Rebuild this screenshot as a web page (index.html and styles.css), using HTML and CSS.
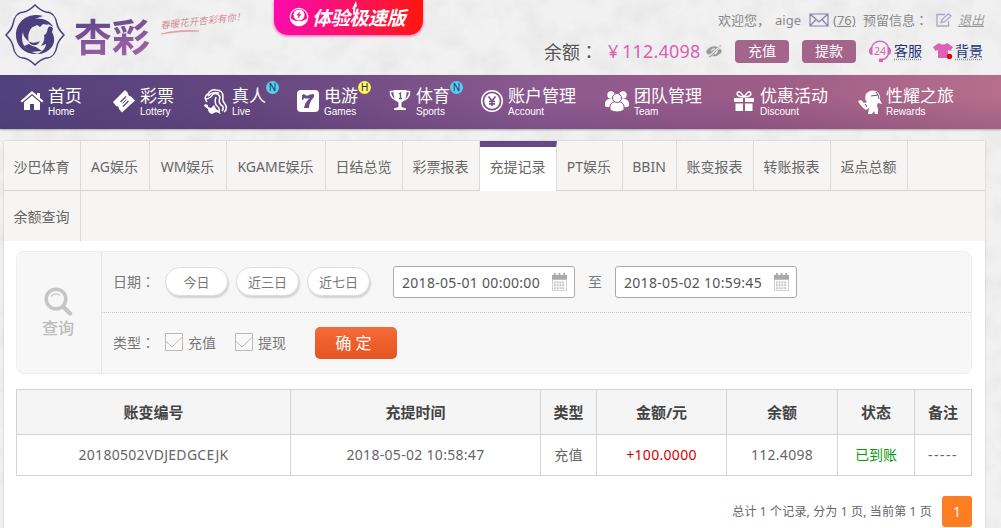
FILE: index.html
```html
<!DOCTYPE html>
<html lang="zh-CN">
<head>
  <meta charset="UTF-8">
  <meta name="viewport" content="width=device-width, initial-scale=1.0">
  <title>充提记录</title>
  <link rel="stylesheet" href="styles.css">
</head>
<body>
  <header class="header">
    <div class="brand">
      <svg class="logo" viewBox="0 0 60 62" width="60" height="62">
        <path fill="none" stroke="#4b3f80" stroke-width="1.5" d="M30 1C34 5 37 7 41 8C47 8 51 13 52 20C53 25 56 28 59 31C56 34 53 37 52 42C51 49 47 54 41 54C37 55 34 57 30 61C26 57 23 55 19 54C13 54 9 49 8 42C7 37 4 34 1 31C4 28 7 25 8 20C9 13 13 8 19 8C23 7 26 5 30 1Z"/>
        <g fill="#4b3f80">
          <path d="M38 12C24 8 11 17 11 31C11 43 21 51 33 50C24 48 17 43 17 34C17 24 26 15 38 12Z"/>
          <path d="M18 26C21 17 28 13 37 15C43 16 47 20 48 23C42 18 35 18 30 21C24 25 22 31 24 38C27 43 33 42 35 37C31 39 25 40 21 35C18 32 18 29 18 26Z"/>
          <path d="M26 20L31 17L40 17L43 21L38 20L35 23L32 21L28 23Z"/>
          <path d="M43 24C44 22 47 22 48 25L47 28C50 33 50 40 46 44C42 48 38 50 32 50C37 48 41 44 41 40L36 42C39 38 40 34 39 31C42 30 42 27 43 24Z"/>
          <path d="M19 42L24 40Q28 43 31 43L37 47L26 48Q22 46 19 42Z"/>
        </g>
      </svg>
      <div class="brand-name">杏彩</div>
      <div class="slogan">
        <span>春暖花开杏彩有你！</span>
        <svg viewBox="0 0 38 6" width="38" height="6"><path d="M0 5Q18 0 38 2Q18 2 0 5Z" fill="#dc9299" stroke="#dc9299" stroke-width=".6"/></svg>
      </div>
    </div>

    <a class="speed-banner">
      <svg viewBox="0 0 20 20" width="20" height="20">
        <circle cx="10" cy="10" r="8.7" fill="none" stroke="#fff" stroke-width="1.2"/>
        <path fill="#fff" d="M2 12L7 14H13L18 12C17 16 14 19 10 19S3 16 2 12Z"/>
        <circle cx="10" cy="8" r="5.5" fill="#fff"/>
        <path fill="#f0149a" d="M11 4L7.500 8.500H9.500L8.500 12L12.500 7.200H10.300Z"/>
      </svg>
      <span>体验极速版</span>
      <svg class="spark" viewBox="0 0 8 16" width="8" height="16"><path fill="#fff" d="M5 0L6 6L4.500 6L4 12L2 12L2.500 8L1 8Z"/></svg>
    </a>

    <div class="account">
      <div class="user-row">
        <span>欢迎您，</span>
        <span>aige</span>
        <svg viewBox="0 0 20 14" width="20" height="14" fill="none" stroke="#8a80b0" stroke-width="1.2"><path d="M1 1H19V13H1ZM1 1L10 9L19 1M1 13L7 6.500M19 13L13 6.500"/></svg>
        <a class="mail-count">(76)</a>
        <span>预留信息<span class="colon" lang="zh-TW">：</span></span>
        <svg viewBox="0 0 16 14" width="16" height="14" fill="none" stroke="#aaa5c6" stroke-width="1.3"><path d="M9 1.500H1V13H12.500V8M5 9.500L6 6.500L12.500 .8L15 3L8.500 9Z"/></svg>
        <a class="logout">退出</a>
      </div>
      <div class="balance-row">
        <span class="balance-label">余额<span class="colon" lang="zh-TW">：</span></span>
        <span class="balance-sign">¥</span>
        <span class="balance">112.4098</span>
        <svg viewBox="0 0 18 14" width="18" height="14">
          <path fill="#99999c" d="M1 8C3 3 8 1 13 3L15 1L16.500 2L5 13.500L3.500 12.500L5 11C3 10.500 2 9.500 1 8Z"/>
          <path fill="#99999c" d="M15 4.500L17 7C15 11 11 13 7 12Z"/>
          <path fill="none" stroke="#eee" stroke-width="1.200" d="M4 12L15.500 2M6 7Q8 4.500 10 5M10 10L12.500 7.500"/>
        </svg>
        <a class="pill-btn">充值</a>
        <a class="pill-btn">提款</a>
        <svg class="service-icon" viewBox="0 0 22 22" width="22" height="22">
          <path fill="none" stroke="#dc62b5" stroke-width="1.400" d="M2.500 8A8.700 8.700 0 0 1 19.500 8M19.500 14Q18 19 12 20"/>
          <path fill="#dc62b5" d="M3.500 7V15Q0 15 0 11T3.500 7ZM18.500 7V15Q22 15 22 11T18.500 7ZM10 18.500H14V22H10Z"/>
          <text x="5" y="14.500" textLength="12" lengthAdjust="spacingAndGlyphs">24</text>
        </svg>
        <a class="link">客服</a>
        <svg viewBox="0 0 20 18" width="20" height="18">
          <path fill="#dc62b5" d="M6 1Q10 4 14 1L20 5L17.500 9L15 8V16H5V8L2.500 9L0 5Z"/>
          <circle cx="16.500" cy="14.500" r="2.700" fill="#e60012"/>
        </svg>
        <a class="link">背景</a>
      </div>
    </div>
  </header>

  <nav class="nav">
    <a class="nav-item">
      <svg viewBox="0 0 24 24"><path d="M12 2L.5 12L2 13.500L12 5L22 13.500L23.500 12L20 9V4H17V6.300Z"/><path d="M12 6.500L4 13.300V21H10V15H14V21H20V13.300Z"/></svg>
      <span class="nav-text">首页<small>Home</small></span>
    </a>
    <a class="nav-item">
      <svg viewBox="0 0 24 24"><path d="M13 1L16 4Q16 7 19 7.500L23 11.500L10 23.500L7 20Q7 17 4 17L1 13Z"/><path class="cut" stroke-width="1.500" d="M8.500 13L14 7.500M11 17.500L16.500 12"/><path class="cut" stroke-width="1" d="M10.500 14.500L14.500 10.500"/></svg>
      <span class="nav-text">彩票<small>Lottery</small></span>
    </a>
    <a class="nav-item">
      <svg class="icon-live" viewBox="0 0 26 28"><g fill="none" stroke="#fff" stroke-width="1.500"><path d="M5 15Q1 10 6 7Q9 2 14 3Q21 3 21 10Q20 14 23 17Q26 22 22 25"/><path d="M4 12Q9 11 11 7Q16 5 18 10Q16 15 19 18Q23 20 20 24"/><path d="M6 9Q11 4 17 6M14 10Q12 16 15 19Q18 21 17 25"/></g><path d="M3 17L6 18L6 20L9 21L12 18L14 22L17 24L19 27L14 25L10 27Q6 26 6 22L2 19Z"/></svg>
      <span class="nav-text">真人<small>Live</small></span>
      <i class="flag flag-new">N</i>
    </a>
    <a class="nav-item">
      <svg viewBox="0 0 24 24"><rect x="1" y="1" width="22" height="22" rx="4"/><path fill="#6a4b84" d="M6 6L8 5Q11 8 14 5.500L18 5V8Q13 13 13 19H8Q9 13 14 9Q11 10 8 9L7 11H6Z"/></svg>
      <span class="nav-text">电游<small>Games</small></span>
      <i class="flag flag-hot">H</i>
    </a>
    <a class="nav-item">
      <svg viewBox="0 0 24 24"><path d="M5.500 1H18.500Q19 11 13.500 13.500V18L18 19.500V21H6V19.500L10.500 18V13.500Q5 11 5.500 1Z"/><path class="line thin" d="M6 2.500H2.500Q2 8.500 8 11M18 2.500H21.500Q22 8.500 16 11"/><path fill="none" stroke="#765087" stroke-width="1.300" d="M11 5L12.500 4V9M11 9.500H14"/></svg>
      <span class="nav-text">体育<small>Sports</small></span>
      <i class="flag flag-new">N</i>
    </a>
    <a class="nav-item">
      <svg viewBox="0 0 24 24"><circle class="line thin" cx="12" cy="12" r="10.300"/><circle cx="12" cy="12" r="7.700"/><path fill="none" stroke="#80528a" stroke-width="1.700" d="M8.500 7.500L12 12L15.500 7.500M12 12V17M9 12.500H15M9 14.800H15"/></svg>
      <span class="nav-text">账户管理<small>Account</small></span>
    </a>
    <a class="nav-item">
      <svg class="icon-team" viewBox="0 0 26 24"><circle cx="7" cy="6" r="3.700"/><circle cx="19" cy="6" r="3.700"/><path d="M1 17V14Q2 10 6 10H20Q24 10 25 14V17Q22 19 20 18H6Q3 19 1 17Z"/><g stroke="#88548a" stroke-width="1"><path d="M6 21V17Q7 12.500 13 12.500T20 17V21Q13 25 6 21Z"/><circle cx="13" cy="9" r="4.500"/></g></svg>
      <span class="nav-text">团队管理<small>Team</small></span>
    </a>
    <a class="nav-item">
      <svg viewBox="0 0 24 24"><path d="M2 9H11V13H2ZM13 9H22V13H13ZM3.500 14.500H11V22H3.500ZM13 14.500H20.500V22H13Z"/><path class="line thin" d="M12 8Q6 8 5 5Q6 1 9 4L12 8Q18 8 19 5Q18 1 15 4L12 8"/></svg>
      <span class="nav-text">优惠活动<small>Discount</small></span>
    </a>
    <a class="nav-item">
      <svg class="icon-rewards" viewBox="0 0 24 26"><path d="M0 12L3 11L6 14L9 13Q6 10 8 5Q12 0 18 2Q23 5 22 11L24 15L20 14Q18 17 20 19L20 25H17L16 22L14 25H10L11 19L8 21Q3 18 0 12Z"/><path class="cut" d="M13 7L20 6M18 3Q21 6 21 10M7 15L9 18"/></svg>
      <span class="nav-text">性耀之旅<small>Rewards</small></span>
    </a>
  </nav>

  <main class="main">
    <div class="tabs">
      <a class="tab">沙巴体育</a>
      <a class="tab">AG娱乐</a>
      <a class="tab">WM娱乐</a>
      <a class="tab">KGAME娱乐</a>
      <a class="tab">日结总览</a>
      <a class="tab">彩票报表</a>
      <a class="tab active">充提记录</a>
      <a class="tab">PT娱乐</a>
      <a class="tab">BBIN</a>
      <a class="tab">账变报表</a>
      <a class="tab">转账报表</a>
      <a class="tab">返点总额</a>
      <span class="tab-rest"></span>
      <a class="tab">余额查询</a>
    </div>

    <form class="search">
      <div class="search-title">
        <svg viewBox="0 0 30 30" width="30" height="30" fill="none" stroke="#c6c6c6">
          <circle cx="13" cy="12" r="9.800" stroke-width="3.600"/>
          <path d="M8 9.500Q12 5 17 8.500" stroke-width="1.200"/>
          <path d="M20.500 20L27 26.500" stroke-width="4.500" stroke-linecap="round"/>
        </svg>
        <span>查询</span>
      </div>
      <div class="search-fields">
        <div class="search-row">
          <span class="field-label">日期<span class="colon" lang="zh-TW">：</span></span>
          <button type="button" class="day-btn">今日</button>
          <button type="button" class="day-btn">近三日</button>
          <button type="button" class="day-btn">近七日</button>
          <div class="date-box first">
            <span class="date-text">2018-05-01 00:00:00</span>
            <svg viewBox="0 0 16 20" width="15" height="19"><path fill="#aaa" d="M0 3H2V1H4V3H7V1H9V3H12V1H14V3H16V8H0Z"/><path fill="none" stroke="#ccc" d="M.5 8V19.500H15.500V8"/><path fill="none" stroke="#c4c4c4" stroke-width="2" stroke-dasharray="2 1" d="M2 11H14M2 14H14M2 17H14"/></svg>
          </div>
          <span class="to">至</span>
          <div class="date-box">
            <span class="date-text">2018-05-02 10:59:45</span>
            <svg viewBox="0 0 16 20" width="15" height="19"><path fill="#aaa" d="M0 3H2V1H4V3H7V1H9V3H12V1H14V3H16V8H0Z"/><path fill="none" stroke="#ccc" d="M.5 8V19.500H15.500V8"/><path fill="none" stroke="#c4c4c4" stroke-width="2" stroke-dasharray="2 1" d="M2 11H14M2 14H14M2 17H14"/></svg>
          </div>
        </div>
        <div class="search-row">
          <span class="field-label">类型<span class="colon" lang="zh-TW">：</span></span>
          <label class="check"><svg viewBox="0 0 18 18" width="18" height="18"><path d="M.5 .5H17.500V17.500H.5ZM.5 8L7 14L17.500 4"/></svg>充值</label>
          <label class="check"><svg viewBox="0 0 18 18" width="18" height="18"><path d="M.5 .5H17.500V17.500H.5ZM.5 8L7 14L17.500 4"/></svg>提现</label>
          <button type="button" class="submit">确 定</button>
        </div>
      </div>
    </form>

    <table class="records">
      <colgroup>
        <col class="col-id"><col class="col-time"><col class="col-type"><col class="col-amount"><col class="col-balance"><col class="col-status"><col class="col-note">
      </colgroup>
      <thead>
        <tr><th>账变编号</th><th>充提时间</th><th>类型</th><th>金额/元</th><th>余额</th><th>状态</th><th>备注</th></tr>
      </thead>
      <tbody>
        <tr><td>20180502VDJEDGCEJK</td><td>2018-05-02 10:58:47</td><td>充值</td><td class="plus">+100.0000</td><td>112.4098</td><td class="done">已到账</td><td class="note">-----</td></tr>
      </tbody>
    </table>

    <div class="pager">
      <span>总计 1 个记录, 分为 1 页, 当前第 1 页</span>
      <a class="page">1</a>
    </div>
  </main>
</body>
</html>
```
FILE: styles.css
```css
* {
  box-sizing: border-box;
}
body {
  margin: 0;
  height: 528px;
  overflow: hidden;
  color: #666;
  font: 14px/20px "Noto Sans", "Noto Sans CJK SC", sans-serif;
  background: #f1f1f1 url("data:image/svg+xml,%3Csvg xmlns='http://www.w3.org/2000/svg' width='1001' height='528'%3E%3Cfilter id='a'%3E%3CfeTurbulence type='fractalNoise' baseFrequency='.04' numOctaves='5' seed='11'/%3E%3CfeColorMatrix values='0 0 0 0 .6 0 0 0 0 .6 0 0 0 0 .6 .5 0 0 0 -.2'/%3E%3C/filter%3E%3Crect width='100%25' height='100%25' filter='url(%23a)'/%3E%3C/svg%3E");
}
svg {
  display: block;
}
/* full-width colon centred in its box */
.colon {
  font-family: "Noto Sans CJK TC", sans-serif;
}

/* header */
.header {
  position: relative;
  display: flex;
  justify-content: space-between;
  height: 75px;
}
.brand {
  display: flex;
  padding: 4px 0 0 5px;
}
.brand-name {
  width: 78px;
  margin: 8px 0 0 9px;
  font: 700 38px/46px "Noto Sans CJK SC", sans-serif;
  color: transparent;
  background: linear-gradient(165deg, #664a8c 20%, #8f5aa3 50%, #bb6ca5);
  background-clip: text;
  -webkit-background-clip: text;
}
.slogan {
  width: 90px;
  margin: 10px 0 0 8px;
  color: #d48d99;
  font: italic 9.5px/12px "Noto Sans CJK SC", sans-serif;
  white-space: nowrap;
}
.slogan span {
  display: block;
  transform: rotate(-6deg);
}
.slogan svg {
  margin: 3px 0 0 1px;
}
.speed-banner {
  position: absolute;
  left: 274px;
  top: 0;
  width: 149px;
  height: 35px;
  padding: 7px 0 0 15px;
  display: flex;
  gap: 3px;
  color: #fff;
  font: italic 700 19px/20px "Noto Sans CJK SC", sans-serif;
  letter-spacing: -0.3px;
  white-space: nowrap;
  border-radius: 0 0 14px 14px;
  background: linear-gradient(90deg, #fb0bad, #fb1267 50%, #fd160d);
  box-shadow: 0 1px 3px #ff4fb0;
}
.spark {
  position: absolute;
  left: 77px;
  top: 1px;
}
.account {
  padding-right: 16px;
}
.user-row,
.balance-row {
  display: grid;
  align-items: center;
  justify-content: end;
  white-space: nowrap;
}
.user-row {
  grid-template-columns: 57px 34px 24px 30px 73px 22px 27px;
  height: 21px;
  margin-top: 9px;
  color: #888;
  font-size: 13px;
}
.user-row a {
  text-decoration: underline;
}
.logout {
  color: #999;
  font-style: italic;
}
.balance-row {
  grid-template-columns: 64px 14px 83px 30px 67px 67px 25px 39px 22px 30px;
  height: 24px;
  margin-top: 9px;
}
.balance-label {
  color: #555;
  font-size: 18px;
}
.balance-sign,
.balance {
  color: #dc5fb0;
  font-size: 18px;
  letter-spacing: 0.2px;
}
.pill-btn {
  width: 54px;
  height: 23px;
  color: #fff;
  line-height: 22px;
  text-align: center;
  border-radius: 4px;
  background: #a4658b;
}
.service-icon text {
  fill: #dc62b5;
  font: 10px "Noto Sans", sans-serif;
}
.link {
  color: #1d3277;
  text-decoration: underline dotted #899;
  text-underline-offset: 3px;
}

/* main navigation */
.nav {
  display: flex;
  height: 54px;
  padding-left: 18px;
  color: #fff;
  background:
    linear-gradient(180deg, rgba(60, 40, 100, 0) 40%, rgba(65, 45, 100, 0.2)),
    linear-gradient(100deg, #51417c, #65477f 25%, #8d5a90 55%, #9d5c87 75%, #b76f8c);
  box-shadow: 0 1px 2px rgba(0, 0, 0, 0.3);
}
.nav-item {
  position: relative;
  display: flex;
  flex: none;
  padding-right: 28px;
}
.nav-item svg {
  width: 24px;
  height: 24px;
  margin: 14px 4px 0 2px;
  fill: #fff;
}
.nav-item .icon-live,
.nav-item .icon-team {
  width: 26px;
  margin: 14px 4px 0 0;
}
.nav-item .icon-live {
  height: 28px;
  margin-top: 12px;
}
.nav-item .icon-rewards {
  height: 26px;
}
.nav-item .line {
  fill: none;
  stroke: #fff;
  stroke-width: 2;
}
.nav-item .thin {
  stroke-width: 1.5;
}
.nav-item .cut {
  fill: none;
  stroke: #684a82;
}
.nav-text {
  display: block;
  padding-top: 9px;
  font: 17px/22px "Noto Sans CJK SC", sans-serif;
  white-space: nowrap;
}
.nav-text small {
  display: block;
  width: 0;
  font: 10px/12px "Liberation Sans", sans-serif;
}
.flag {
  position: absolute;
  right: 15px;
  top: 6px;
  width: 13px;
  height: 13px;
  color: #234;
  font: 10px/13px "Liberation Sans", sans-serif;
  text-align: center;
  border-radius: 50%;
}
.flag-new {
  background: #55cdf3;
}
.flag-hot {
  background: #fff45c;
}

/* content */
.main {
  width: 981px;
  height: 400px;
  margin: 12px 0 0 4px;
  background: #fff;
  box-shadow: 0 0 2px rgba(0, 0, 0, 0.2);
}
.tabs {
  display: grid;
  grid-template-columns: 77px 69px 77px 99px 77px 77px 77px 66px 54px 77px 77px 77px 1fr;
  grid-template-rows: 50px 50px;
  background: #f6f5f3;
}
.tab,
.tab-rest {
  padding: 16px 1px 0 0;
  text-align: center;
  white-space: nowrap;
  border-right: 1px solid #dcdad9;
  border-bottom: 1px solid #d6d4d3;
}
.tab:last-child {
  border-bottom: 0;
}
.tab-rest {
  border-right: 0;
}
.tab.active {
  padding-top: 10px;
  background: #fff;
  border-top: 6px solid #684785;
  border-bottom: 0;
}
.search {
  display: flex;
  height: 123px;
  margin: 10px 13px 0 12px;
  color: #777;
  background: #f7f7f7;
  border: 1px solid #eee;
  border-radius: 8px;
}
.search-title {
  display: flex;
  flex-direction: column;
  align-items: center;
  width: 85px;
  padding: 35px 2px 0 0;
  color: #bbb;
  font-size: 16px;
  font-weight: 500;
  border-right: 1px solid #e3e3e3;
}
.search-title span {
  margin-top: 1px;
}
.search-fields {
  flex: 1;
}
.search-row {
  display: flex;
  align-items: center;
  height: 61px;
  padding: 0 0 1px 11px;
}
.search-row:first-child {
  border-bottom: 1px dotted #ccc;
}
.search-row:last-child {
  padding-bottom: 2px;
}
.field-label {
  width: 52px;
}
button {
  padding: 0;
  font: inherit;
}
.day-btn {
  width: 63px;
  height: 29px;
  margin-right: 8px;
  color: #777;
  font-size: 13px;
  line-height: 26px;
  background: #fff;
  border: 1px solid #ddd;
  border-radius: 15px;
  box-shadow: 1px 2px 2px rgba(0, 0, 0, 0.15);
}
.date-box {
  display: flex;
  justify-content: space-between;
  width: 182px;
  height: 32px;
  padding: 6px 7px 0 8px;
  color: #555;
  background: #fff;
  border: 1px solid #aaa;
  border-radius: 3px;
}
.date-box.first {
  margin-left: 15px;
}
.date-box svg {
  margin-top: -1px;
}
.date-text {
  letter-spacing: 0.3px;
  white-space: nowrap;
}
.to {
  width: 40px;
  text-align: center;
}
.check {
  display: flex;
  gap: 5px;
  width: 70px;
}
.check svg {
  fill: #fafafa;
  stroke: #bbb;
}
.submit {
  width: 82px;
  height: 32px;
  margin-left: 10px;
  padding-right: 5px;
  color: #fff;
  font-size: 16px;
  background: linear-gradient(#f56b38, #e55421);
  border: 0;
  border-radius: 5px;
}
.records {
  width: 956px;
  margin: 15px 0 0 12px;
  table-layout: fixed;
  border-collapse: collapse;
  text-align: center;
}
.records th,
.records td {
  padding: 0;
  border: 1px solid #d4d4d4;
}
.records th {
  height: 45px;
  color: #444;
  font-size: 15px;
  background: #f5f5f5;
}
.records td {
  height: 41px;
  letter-spacing: 0.3px;
}
.col-id {
  width: 274px;
}
.col-time {
  width: 250px;
}
.col-type {
  width: 56px;
}
.col-amount {
  width: 130px;
}
.col-balance {
  width: 111px;
}
.col-status {
  width: 77px;
}
.records .plus {
  color: #d40000;
}
.records .done {
  color: #0a9c0a;
  letter-spacing: 0;
}
.records .note {
  letter-spacing: 1.5px;
}
.pager {
  display: flex;
  align-items: center;
  justify-content: flex-end;
  gap: 10px;
  margin: 20px 13px 0 0;
  font-size: 12px;
}
.pager span {
  letter-spacing: 0.15px;
}
.page {
  width: 30px;
  height: 31px;
  color: #fff;
  font-size: 14px;
  line-height: 31px;
  text-align: center;
  border-radius: 3px;
  background: #fd7d22;
}
```
